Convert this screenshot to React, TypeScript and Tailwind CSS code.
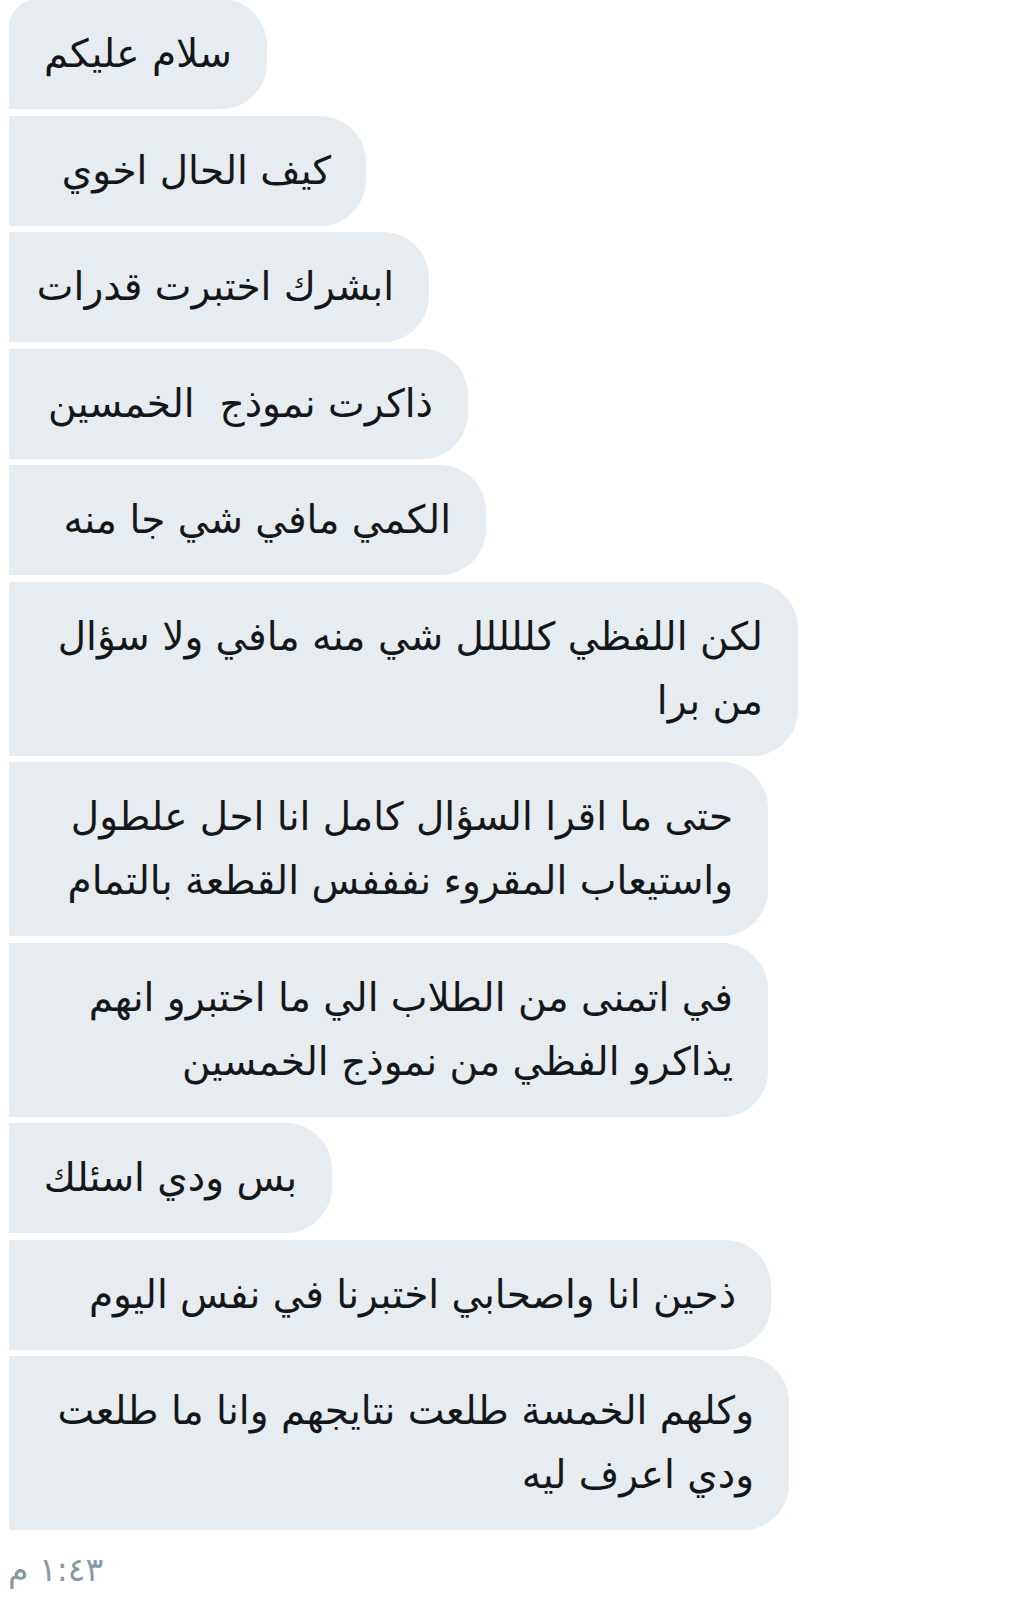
const messages: { lines: string[]; width: string }[] = [
  { lines: ["سلام عليكم"], width: "w-[258px]" },
  { lines: ["كيف الحال اخوي"], width: "w-[357px]" },
  { lines: ["ابشرك اختبرت قدرات"], width: "w-[420px]" },
  { lines: ["ذاكرت نموذج  الخمسين"], width: "w-[459px]" },
  { lines: ["الكمي مافي شي جا منه"], width: "w-[477px]" },
  { lines: ["لكن اللفظي كللللل شي منه مافي ولا سؤال", "من برا"], width: "w-[789px]" },
  { lines: ["حتى ما اقرا السؤال كامل انا احل علطول", "واستيعاب المقروء نفففس القطعة بالتمام"], width: "w-[759px]" },
  { lines: ["في اتمنى من الطلاب الي ما اختبرو انهم", "يذاكرو الفظي من نموذج الخمسين"], width: "w-[759px]" },
  { lines: ["بس ودي اسئلك"], width: "w-[323px]" },
  { lines: ["ذحين انا واصحابي اختبرنا في نفس اليوم"], width: "w-[762px]" },
  { lines: ["وكلهم الخمسة طلعت نتايجهم وانا ما طلعت", "ودي اعرف ليه"], width: "w-[780px]" },
]

function Bubble({ lines, width, first }: { lines: string[]; width: string; first?: boolean }) {
  return (
    <div
      dir="rtl"
      className={`${width} ${first ? "rounded-tl-[28px]" : ""} rounded-r-[46px] bg-[#e6ecf0] px-[35px] py-[23px] text-right text-[39px] leading-[64px] text-[#14171a] whitespace-pre`}
    >
      {lines.map((l, i) => (
        <div key={i}>{l}</div>
      ))}
    </div>
  )
}

export default function App() {
  return (
    <div className="min-h-[1623px] w-full overflow-hidden bg-white font-['DejaVu_Sans',sans-serif]">
      <div className="-mt-[1px] flex flex-col items-start gap-[6.5px] pl-[9px]">
        {messages.map((m, i) => (
          <Bubble key={i} lines={m.lines} width={m.width} first={i === 0} />
        ))}
      </div>
      <div dir="rtl" className="mt-[18px] w-fit pl-[8px] text-[33px] leading-[44px] text-[#8899a6]">
        ١:٤٣ م
      </div>
    </div>
  )
}
